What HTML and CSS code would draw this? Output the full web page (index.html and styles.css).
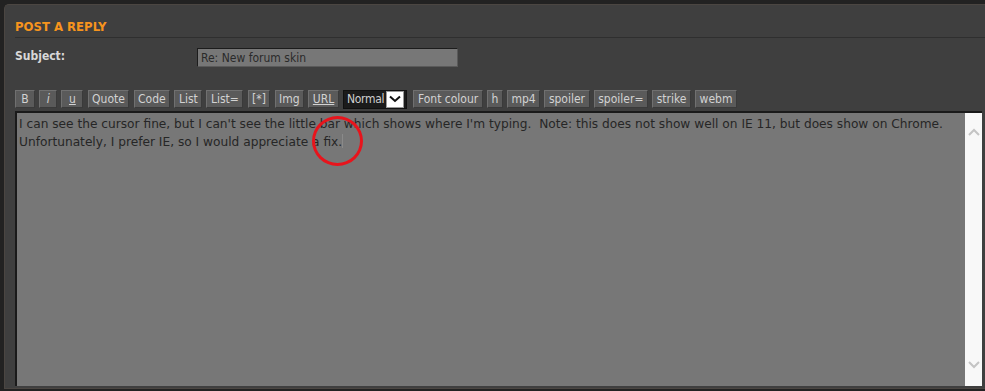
FILE: index.html
```html
<!DOCTYPE html>
<html lang="en">
<head>
  <meta charset="UTF-8" />
  <title>Post a reply</title>
  <link rel="stylesheet" href="styles.css">
</head>
<body>
  <div class="panel">
    <h2 class="panel-title">POST A REPLY</h2>

    <div class="field-row">
      <label class="field-label" for="subject">Subject:</label>
      <input id="subject" class="subject-input" type="text" value="Re: New forum skin">
    </div>

    <!-- BBCode toolbar -->
    <div class="toolbar">
      <button class="bb bb-b">B</button>
      <button class="bb bb-i">i</button>
      <button class="bb bb-u">u</button>
      <button class="bb">Quote</button>
      <button class="bb">Code</button>
      <button class="bb">List</button>
      <button class="bb">List=</button>
      <button class="bb">[*]</button>
      <button class="bb">Img</button>
      <button class="bb bb-url">URL</button>
      <div class="size-select">
        <span class="size-label">Normal</span>
        <span class="size-arrow">
          <svg width="12" height="8" viewBox="0 0 12 8"><path d="M1 1.5 L6 6 L11 1.5" fill="none" stroke="#111" stroke-width="2"/></svg>
        </span>
      </div>
      <button class="bb">Font colour</button>
      <button class="bb">h</button>
      <button class="bb">mp4</button>
      <button class="bb">spoiler</button>
      <button class="bb">spoiler=</button>
      <button class="bb">strike</button>
      <button class="bb">webm</button>
    </div>

    <div class="editor">
      <div class="editor-text">I can see the cursor fine, but I can't see the little bar which shows where I'm typing.&nbsp; Note: this does not show well on IE 11, but does show on Chrome. Unfortunately, I prefer IE, so I would appreciate a fix.<span class="caret"></span></div>
      <div class="scrollbar">
        <svg width="12" height="8" viewBox="0 0 12 8"><path d="M1 7 L6 2 L11 7" fill="none" stroke="#c4c4c4" stroke-width="2"/></svg>
        <svg width="12" height="8" viewBox="0 0 12 8"><path d="M1 1 L6 6 L11 1" fill="none" stroke="#c4c4c4" stroke-width="2"/></svg>
      </div>
      <div class="annotation"></div>
    </div>
  </div>
</body>
</html>
```

FILE: styles.css
```css
:root {
  --page-bg: #222;
  --panel-bg: #3f3f3f;
  --accent: #f7941d;
  --label: #d8d8d8;
  --field-bg: #777;
  --font: 'DejaVu Sans Condensed', 'DejaVu Sans', sans-serif;
}

html, body {
  height: 100%;
}

body {
  margin: 0;
  background: var(--page-bg);
  font-family: var(--font);
  overflow: hidden;
}

.panel {
  margin: 4px 0 0 4px;
  height: 385px;
  box-sizing: border-box;
  background: var(--panel-bg);
  border: 1px solid #4b4642;
  border-right: none;
  border-radius: 5px 0 0 0;
  padding: 12px 0 0 10px;
}

.panel-title {
  margin: 0;
  color: var(--accent);
  font-size: 13px;
  font-weight: bold;
  padding: 2px 0 3px;
  border-bottom: 1px solid #2f2f2f;
}

.field-row {
  display: flex;
  align-items: flex-start;
  margin-top: 10px;
}

.field-label {
  width: 182px;
  color: var(--label);
  font-weight: bold;
  font-size: 12px;
  padding-top: 1px;
}

.subject-input {
  width: 261px;
  height: 19px;
  box-sizing: border-box;
  background: var(--field-bg);
  border: 1px solid #5a5a5a;
  border-top-color: #1c1c1c;
  border-left-color: #1c1c1c;
  color: #2a2a2a;
  font-family: var(--font);
  font-size: 12px;
  padding: 0 3px;
  margin: 0;
}

.toolbar {
  display: flex;
  align-items: center;
  gap: 4.2px;
  margin-top: 23px;
  height: 18px;
}

.bb {
  height: 18px;
  box-sizing: border-box;
  background: #5a5a5a;
  color: #d2d2d2;
  border: 1px solid #707070;
  border-right-color: #3a3a3a;
  border-bottom-color: #3a3a3a;
  font-family: var(--font);
  font-size: 12px;
  padding: 0 3.5px;
  line-height: 14px;
  margin: 0;
}

.bb-b {
  width: 20px;
}

.bb-i {
  font-style: italic;
  width: 18px;
}

.bb-u {
  text-decoration: underline;
  width: 22px;
}

.bb-url {
  text-decoration: underline;
}

.size-select {
  display: flex;
  align-items: center;
  height: 19px;
  box-sizing: border-box;
  background: #1b1b1b;
  border: 1px solid #111;
  padding-left: 3px;
  margin-right: 2px;
}

.size-label {
  color: #cfcfcf;
  font-size: 12px;
  letter-spacing: -0.3px;
}

.size-arrow {
  display: flex;
  align-items: center;
  justify-content: center;
  width: 16px;
  height: 15px;
  background: #fff;
  border: 1px solid #999;
  margin: 0 2px 0 2px;
}

.editor {
  position: relative;
  display: flex;
  margin-top: 3px;
  width: 967px;
  height: 275px;
  box-sizing: border-box;
  background: var(--field-bg);
  border-top: 2px solid #1a1a1a;
  border-left: 2px solid #1a1a1a;
}

.editor-text {
  flex: 1;
  color: #262626;
  font-family: 'DejaVu Sans', sans-serif;
  font-size: 12.2px;
  line-height: 18px;
  padding: 2px 0 2px 2px;
}

.caret {
  display: inline-block;
  width: 1px;
  height: 14px;
  background: #8a8a8a;
  vertical-align: -2px;
}

.scrollbar {
  width: 17px;
  background: #f8f8f8;
  display: flex;
  flex-direction: column;
  justify-content: space-between;
  align-items: center;
  padding: 15px 0 17px;
}

.annotation {
  position: absolute;
  left: 295px;
  top: 3px;
  width: 45px;
  height: 44px;
  border: 3px solid #e8141c;
  border-radius: 50%;
}
```
